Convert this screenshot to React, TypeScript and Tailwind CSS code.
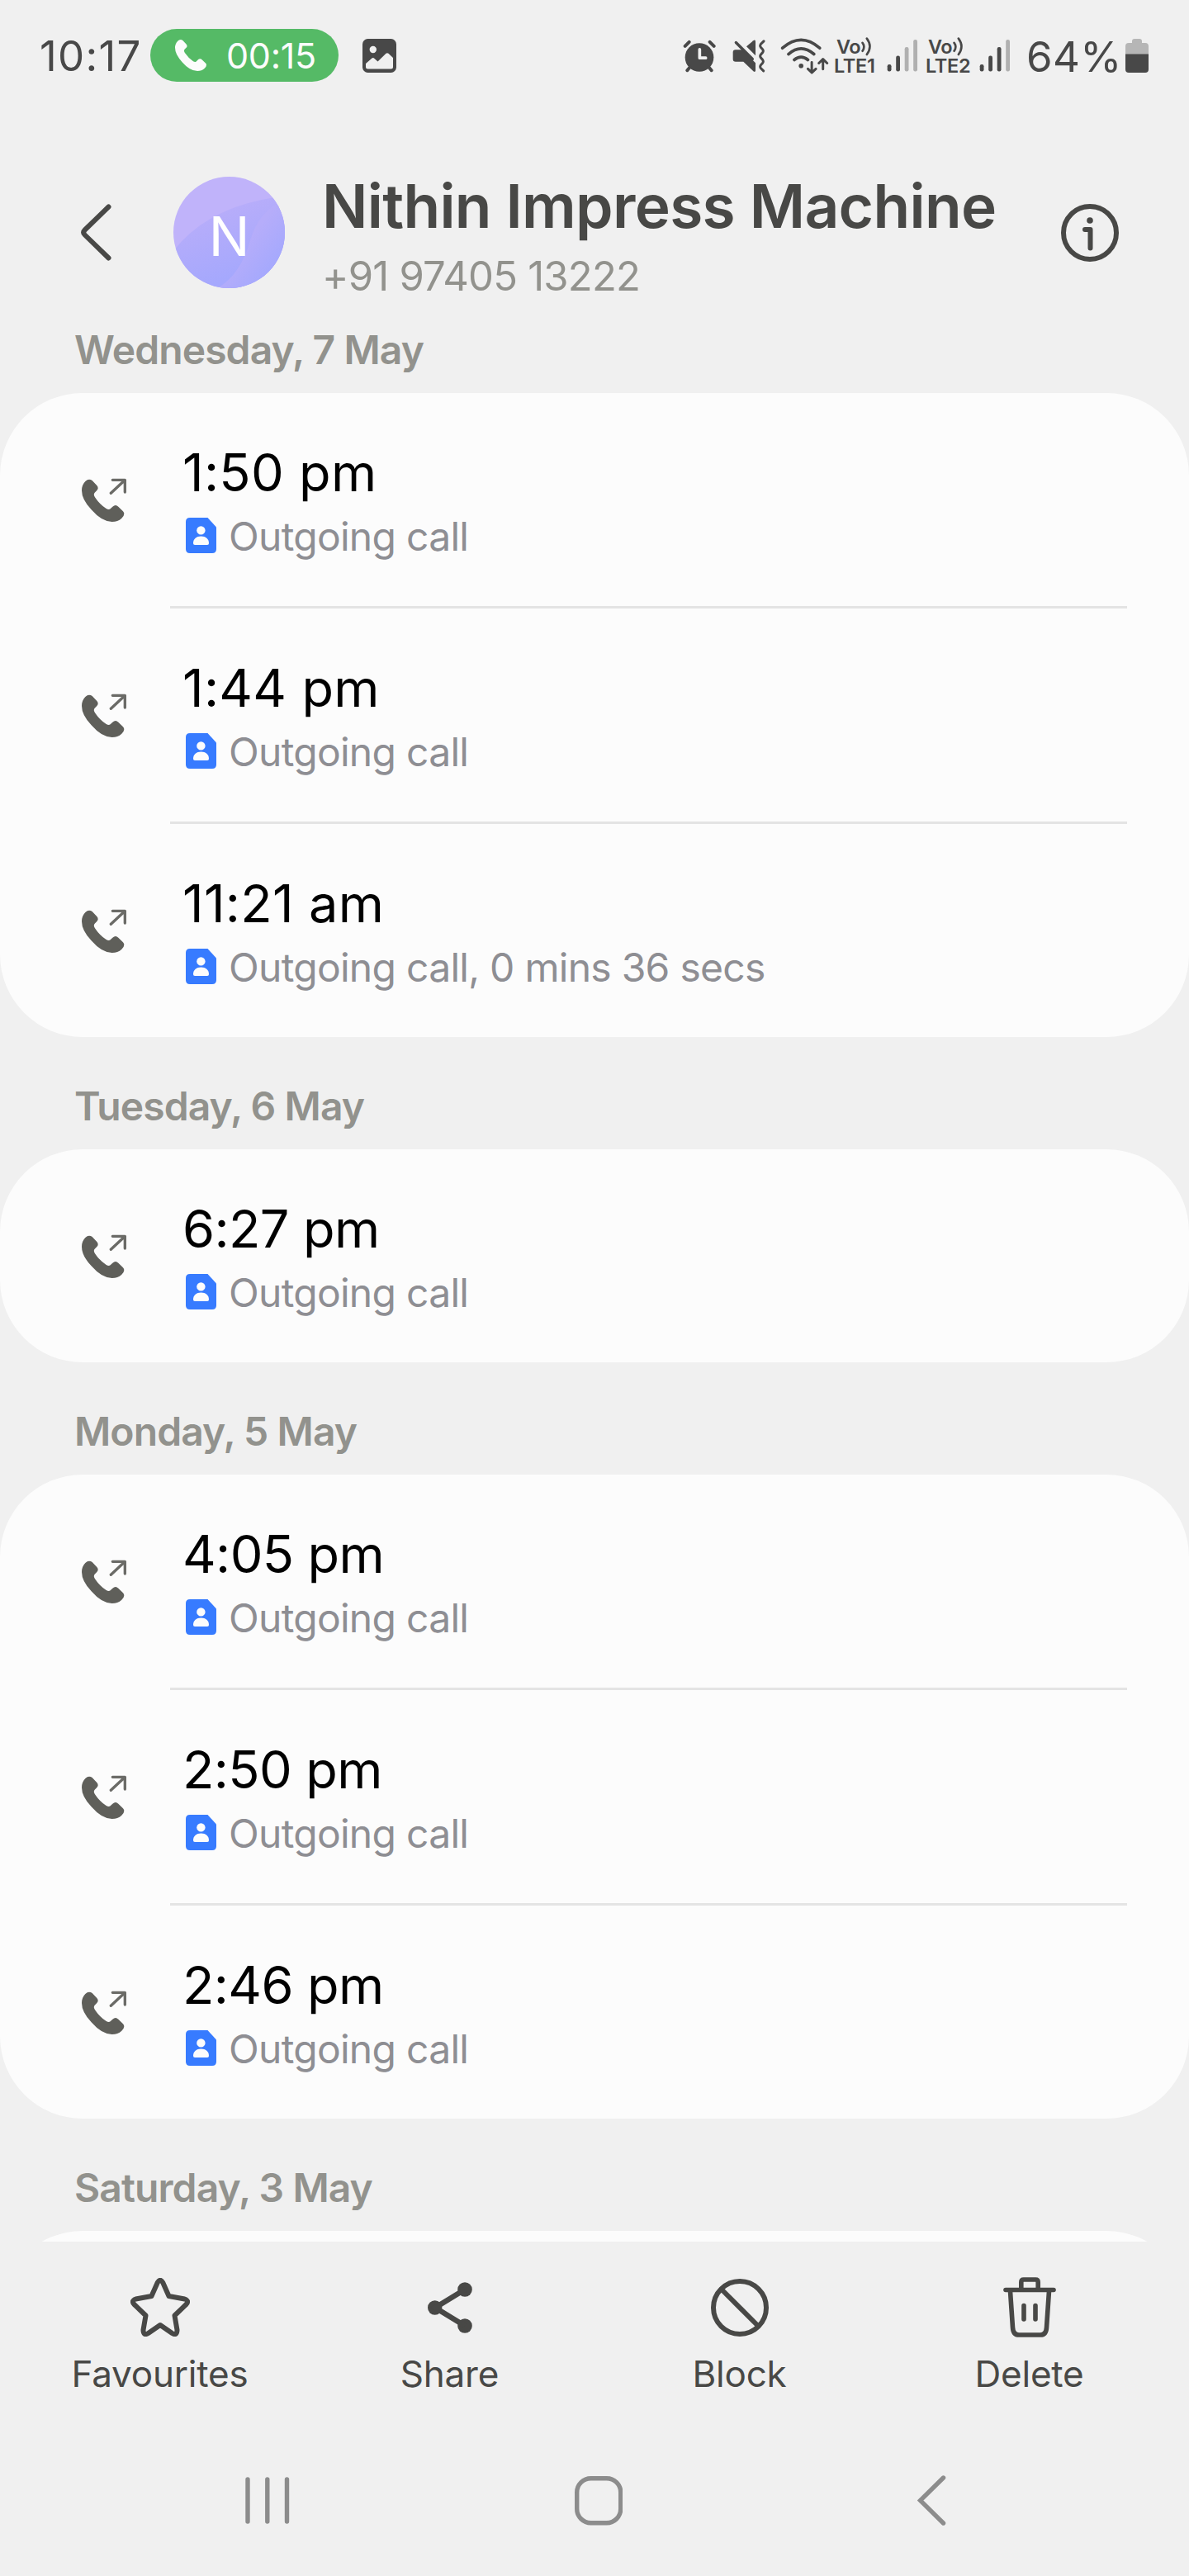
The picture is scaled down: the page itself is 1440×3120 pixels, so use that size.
type Call = {
  time: string
  detail: string
}

type Day = {
  label: string
  calls: Call[]
}

const days: Day[] = [
  {
    label: 'Wednesday, 7 May',
    calls: [
      { time: '1:50 pm', detail: 'Outgoing call' },
      { time: '1:44 pm', detail: 'Outgoing call' },
      { time: '11:21 am', detail: 'Outgoing call, 0 mins 36 secs' },
    ],
  },
  {
    label: 'Tuesday, 6 May',
    calls: [{ time: '6:27 pm', detail: 'Outgoing call' }],
  },
  {
    label: 'Monday, 5 May',
    calls: [
      { time: '4:05 pm', detail: 'Outgoing call' },
      { time: '2:50 pm', detail: 'Outgoing call' },
      { time: '2:46 pm', detail: 'Outgoing call' },
    ],
  },
  {
    label: 'Saturday, 3 May',
    calls: [],
  },
]

const HANDSET =
  'M54 62Q47 62 40 69Q27 82 27 102Q27 135 62 172Q100 216 137 216Q158 216 172 203Q181 195 181 187Q181 182 177 178L160 161Q150 151 139 161L131 169Q125 174 116 168Q92 152 76 128Q68 117 74 110L82 102Q90 94 82 84L65 66Q60 62 54 62Z'

/* Status bar */

function VoLte({ sim }: { sim: string }) {
  return (
    <div className="flex flex-col text-[23.5px] font-semibold leading-[23px]">
      <div className="flex h-[23px] pl-[3px]">
        <span className="w-[29px] tracking-[-0.4px]">Vo</span>
        <svg viewBox="686 49 44 70" className="h-[23px] w-[15px] shrink-0" fill="none" stroke="currentColor" strokeWidth="8" strokeLinecap="round">
          <path d="M693 70Q704 84 693 100M709 54Q731 83 709 113" />
        </svg>
      </div>
      <span className="whitespace-nowrap tracking-[-0.3px]">LTE{sim}</span>
    </div>
  )
}

function SignalBars({ level, className }: { level: number; className: string }) {
  const tops = [31, 20.5, 10, 1]
  return (
    <svg viewBox="0 0 38 40" className={`h-10 w-[38px] shrink-0 ${className}`}>
      {tops.map((top, i) => (
        <rect key={top} x={0.7 + i * 10.5} y={top} width="4.8" height={39.5 - top} rx="2.2" fill={i < level ? '#484848' : '#b0b0b0'} />
      ))}
    </svg>
  )
}

function StatusBar() {
  return (
    <div className="flex h-[134px] shrink-0 items-center pl-12 text-[#484848]">
      <span className="w-[134px] shrink-0 whitespace-nowrap text-[51px] leading-none tracking-[1.3px]">10:17</span>
      <div className="flex h-16 w-[228px] shrink-0 items-center rounded-full bg-[#55ba66] pl-[30px] text-[#fcfcfc]">
        <svg viewBox="27 62 154 154" className="h-[38px] w-[38px]" fill="currentColor">
          <path d={HANDSET} />
        </svg>
        <span className="ml-6 text-[43px] leading-none tracking-[-0.3px]">00:15</span>
      </div>
      <svg viewBox="0 0 41 41" className="ml-[29px] h-[41px] w-[41px] shrink-0">
        <rect width="41" height="41" rx="6.5" fill="#484848" />
        <circle cx="12.8" cy="13" r="4.2" fill="#f0f0f0" />
        <path d="M4 30L11.5 23.5Q13 22.5 14.3 23.7L18.5 27.5L28.5 17.7Q30 16.6 31.5 17.7L37 23V34Q37 36.5 34.5 36.5H6.5Q4 36.5 4 34Z" fill="#f0f0f0" />
      </svg>

      <svg viewBox="36 50 120 122" className="ml-[347px] h-[41px] w-10 shrink-0" fill="none" stroke="currentColor" strokeWidth="12" strokeLinecap="round">
        <circle cx="96" cy="117" r="52" fill="currentColor" stroke="none" />
        <path d="M44 76L59 61M134 61L149 76M52 164L62 152M130 152L140 164" />
        <path d="M97 88V119H119" stroke="#f0f0f0" strokeWidth="11" strokeLinejoin="round" />
      </svg>
      <svg viewBox="217 50 120 122" className="ml-5 h-[41px] w-10 shrink-0">
        <path d="M219 98Q219 89 228 89H253L301 137V165Q300 172 294 168L257 133H229Q219 133 219 123Z" fill="currentColor" />
        <path d="M268 77L293 56Q301 51 301 60V110Z" fill="currentColor" />
        <path d="M230 63L290 123" stroke="currentColor" strokeWidth="10" strokeLinecap="round" />
        <path d="M331 58L320 69Q316 75 320 80L327 88Q331 94 327 99L320 107Q316 113 320 118L327 126Q331 132 327 137L320 145Q316 151 320 156L330 166" fill="none" stroke="currentColor" strokeWidth="9" strokeLinecap="round" />
      </svg>
      <svg viewBox="390 42 178 134" className="ml-[18px] h-[45px] w-[59px] shrink-0" fill="none" stroke="currentColor" strokeLinecap="round" strokeLinejoin="round">
        <path d="M398 81Q466 22 534 81M420 103Q466 63 513 103M441 124Q466 104 491 124" strokeWidth="11" />
        <circle cx="466" cy="146" r="8.5" fill="currentColor" stroke="none" />
        <path d="M505 133V169M491 157L505 171L520 157M546 158V122M531 136L546 121L561 136" strokeWidth="9" />
      </svg>
      <div className="ml-[6px] mt-px w-[53px] shrink-0">
        <VoLte sim="1" />
      </div>
      <SignalBars level={2} className="ml-[11px]" />
      <div className="ml-[9px] mt-px w-[53px] shrink-0">
        <VoLte sim="2" />
      </div>
      <SignalBars level={3} className="ml-[12px]" />
      <span className="ml-[19px] mt-[3px] w-[120px] shrink-0 whitespace-nowrap text-[51px] leading-none tracking-[0.3px]">64%</span>
      <svg viewBox="0 0 28 41" className="h-[41px] w-7 shrink-0">
        <path d="M8 5V3Q8 0 11 0H17Q20 0 20 3V5H24Q28 5 28 9V19H0V9Q0 5 4 5Z" fill="#b6b6b6" />
        <path d="M0 18.5H28V37Q28 41 24 41H4Q0 41 0 37Z" fill="#484848" />
      </svg>
    </div>
  )
}

/* Contact header */

function Avatar() {
  return (
    <div className="relative ml-[75px] h-[135px] w-[135px] shrink-0 overflow-hidden rounded-full">
      <svg viewBox="30 42 405 405" className="h-full w-full">
        <defs>
          <linearGradient id="wave-back" gradientUnits="userSpaceOnUse" x1="190" y1="170" x2="270" y2="400">
            <stop offset="0" stopColor="#b7adfa" />
            <stop offset="1" stopColor="#a5a8fd" />
          </linearGradient>
          <linearGradient id="wave-front" gradientUnits="userSpaceOnUse" x1="300" y1="270" x2="400" y2="350">
            <stop offset="0" stopColor="#b6adfa" />
            <stop offset="1" stopColor="#a6a9fd" />
          </linearGradient>
        </defs>
        <rect x="30" y="42" width="405" height="405" fill="#c0b3fa" />
        <path d="M30 312Q150 155 400 117L435 112V447H30Z" fill="url(#wave-back)" />
        <path d="M435 128Q345 160 312 265Q275 400 190 447H435Z" fill="url(#wave-front)" />
      </svg>
      <span className="absolute inset-0 flex items-center justify-center pt-[9px] text-[66px] leading-none text-white">N</span>
    </div>
  )
}

function Header() {
  return (
    <header className="mt-[70px] flex h-[161px] shrink-0 pl-[98px] text-[#484846]">
      <svg viewBox="0 0 37 69" className="mt-[43px] h-[69px] w-[37px] shrink-0" fill="none" stroke="currentColor" strokeWidth="6" strokeLinecap="round">
        <path d="M33.5 3.5L4.7 31.5Q1.7 34.5 4.7 37.5L33.5 65.5" />
      </svg>
      <div className="mt-[10px]">
        <Avatar />
      </div>
      <div className="ml-[45px] w-[895px] shrink-0">
        <h1 className="whitespace-nowrap text-[73px] font-semibold leading-[91px] tracking-[-0.68px]">Nithin Impress Machine</h1>
        <p className="mt-[10px] text-[49px] leading-[60px] tracking-[-0.78px] text-[#92928d]">+91 97405 13222</p>
      </div>
      <svg viewBox="0 0 70 70" className="mt-[43px] h-[70px] w-[70px] shrink-0" fill="none" stroke="currentColor" strokeWidth="6" strokeLinecap="round" strokeLinejoin="round">
        <circle cx="35" cy="35" r="32" />
        <circle cx="35" cy="20" r="3.8" fill="currentColor" stroke="none" />
        <path d="M29 31H35.5V53.5" />
      </svg>
    </header>
  )
}

/* Call list */

function CallRow({ time, detail }: Call) {
  const tracking = time.startsWith('1') ? 'tracking-[0.3px]' : 'tracking-[-0.6px]'
  return (
    <div className="flex h-[258px] pl-[99px]">
      <svg viewBox="27 57 162 159" className="mt-[103px] h-[53px] w-[54px] shrink-0">
        <path d={HANDSET} fill="#5f5f5a" />
        <path d="M139 64H184V108M133 112L182 66" fill="none" stroke="#6b6b67" strokeWidth="10" strokeLinecap="round" strokeLinejoin="round" />
      </svg>
      <div className="ml-[68px] pt-[56px]">
        <div className={`text-[63px] leading-[80px] text-black ${tracking}`}>{time}</div>
        <div className="mt-2 flex h-[60px] items-center pl-1">
          <svg viewBox="0 0 37 43" className="-mt-[3px] h-[43px] w-[37px] shrink-0">
            <path d="M5 0H26.5L37 11.5V38Q37 43 32 43H5Q0 43 0 38V5Q0 0 5 0Z" fill="#377bff" />
            <circle cx="18.4" cy="15.4" r="5.2" fill="#fcfcfc" />
            <path d="M9 31C9 25.5 13 22.5 18.5 22.5S28 25.5 28 31Q28 33 26 33H11Q9 33 9 31Z" fill="#fcfcfc" />
          </svg>
          <span className="ml-[15px] text-[48px] leading-[60px] tracking-[-0.72px] text-[#8e8e93]">{detail}</span>
        </div>
      </div>
    </div>
  )
}

function DaySection({ day, first }: { day: Day; first: boolean }) {
  return (
    <section>
      <h2 className={`flex items-end pb-[22px] pl-[90px] text-[48px] font-semibold leading-[61px] tracking-[-0.9px] text-[#92928d] ${first ? 'h-[111px]' : 'h-[136px]'}`}>
        {day.label}
      </h2>
      <div className="min-h-[258px] rounded-[100px] bg-[#fcfcfc]">
        {day.calls.map((call, i) => (
          <div key={call.time}>
            {i > 0 && <div className="ml-[206px] mr-[75px] h-[3px] bg-[#e4e4e4]" />}
            <CallRow {...call} />
          </div>
        ))}
      </div>
    </section>
  )
}

/* Bottom actions */

const actions = [
  {
    label: 'Favourites',
    icon: (
      <svg viewBox="0 0 72 71" className="h-[71px] w-[72px]" fill="none" stroke="currentColor" strokeWidth="6" strokeLinejoin="round">
        <path d="M32.8 5.5Q36 0 39.2 5.5L46.5 22L65.5 25.5Q71.5 27.5 67.5 32L53.5 45.5L56.5 63Q56.5 70.5 50.5 67L36 57L21.5 67Q15.5 70.5 15.5 63L18.5 45.5L4.5 32Q.5 27.5 6.5 25.5L25.5 22Z" />
      </svg>
    ),
  },
  {
    label: 'Share',
    icon: (
      <svg viewBox="0 0 54 62" className="h-[62px] w-[54px]" fill="currentColor">
        <circle cx="8.7" cy="31" r="8.7" />
        <circle cx="45" cy="9" r="8.8" />
        <circle cx="45" cy="53" r="8.8" />
        <path d="M45 9L9 31L45 53" fill="none" stroke="currentColor" strokeWidth="6.5" />
      </svg>
    ),
  },
  {
    label: 'Block',
    icon: (
      <svg viewBox="0 0 70 70" className="h-[70px] w-[70px]" fill="none" stroke="currentColor" strokeWidth="6">
        <circle cx="35" cy="35" r="32" />
        <path d="M13 13L57 57" />
      </svg>
    ),
  },
  {
    label: 'Delete',
    icon: (
      <svg viewBox="0 0 64 73" className="h-[73px] w-16" fill="none" stroke="currentColor" strokeWidth="5.6" strokeLinecap="round">
        <path d="M3 15.5H61" />
        <path d="M21.8 15V6Q21.8 3 24.8 3H39.2Q42.2 3 42.2 6V15" />
        <path d="M8.5 17L11.5 61Q12 70 19 70H45Q52 70 52.5 61L55.5 17" />
        <path d="M25 34.5V51M39 34.5V51" />
      </svg>
    ),
  },
]

function ActionBar() {
  return (
    <div className="flex h-[200px] shrink-0 px-[18px] pt-[43px] text-[#484846]">
      {actions.map(({ label, icon }) => (
        <div key={label} className="flex flex-1 flex-col items-center">
          <div className="flex h-[73px] items-center">{icon}</div>
          <span className="mt-[14px] text-[44px] leading-[60px] tracking-[-0.2px]">{label}</span>
        </div>
      ))}
    </div>
  )
}

function NavigationBar() {
  return (
    <nav className="flex h-[205px] shrink-0 pl-[297px] pt-[83px] text-[#8c8c8c]">
      <svg viewBox="0 0 54 61" className="h-[61px] w-[54px]" fill="none" stroke="currentColor" strokeWidth="5.4" strokeLinecap="round">
        <path d="M3 5V56M26.8 5V56M50.5 5V56" />
      </svg>
      <svg viewBox="0 0 58 61" className="ml-[345px] h-[61px] w-[58px]" fill="none" stroke="currentColor" strokeWidth="5.4">
        <rect x="2.7" y="3.7" width="53" height="54" rx="17" />
      </svg>
      <svg viewBox="0 0 36 61" className="ml-[357px] h-[61px] w-9" fill="none" stroke="currentColor" strokeWidth="5.4" strokeLinecap="round">
        <path d="M31.5 3L3.5 30.5L31.5 58" />
      </svg>
    </nav>
  )
}

export default function App() {
  return (
    <div className="flex h-[3120px] w-[1440px] flex-col overflow-hidden bg-[#f0f0f0] font-['Inter',sans-serif]">
      <StatusBar />
      <Header />
      <main className="min-h-0 flex-1 overflow-hidden">
        {days.map((day, i) => (
          <DaySection key={day.label} day={day} first={i === 0} />
        ))}
      </main>
      <ActionBar />
      <NavigationBar />
    </div>
  )
}
